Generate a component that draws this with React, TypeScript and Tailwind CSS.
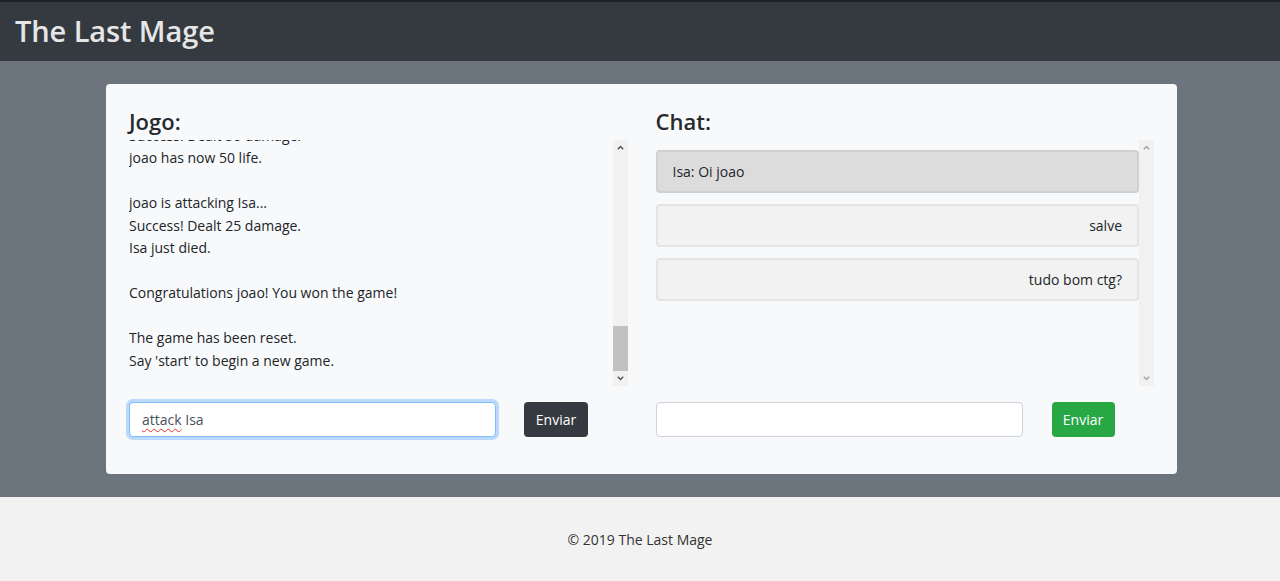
import React from "react";

const logLines = [
  "joao is attacking Isa...",
  "Success! Dealt 50 damage.",
  "joao has now 50 life.",
  "",
  "joao is attacking Isa...",
  "Success! Dealt 25 damage.",
  "Isa just died.",
  "",
  "Congratulations joao! You won the game!",
  "",
  "The game has been reset.",
  "Say 'start' to begin a new game.",
];

const messages = [
  { text: "Isa: Oi joao", mine: false },
  { text: "salve", mine: true },
  { text: "tudo bom ctg?", mine: true },
];

function Chevron({ up, color }: { up?: boolean; color: string }) {
  return (
    <svg width="7" height="5" viewBox="0 0 7 5" className={up ? "" : "rotate-180"}>
      <path d="M0.8 4.2 L3.5 1.4 L6.2 4.2" fill="none" stroke={color} strokeWidth="1.4" />
    </svg>
  );
}

function Scrollbar({ thumb }: { thumb: boolean }) {
  const arrow = thumb ? "#505050" : "#a3a3a3";
  return (
    <div className="w-[15px] shrink-0 bg-[#f1f1f1] flex flex-col">
      <div className="h-[15px] flex items-center justify-center">
        <Chevron up color={arrow} />
      </div>
      <div className="flex-1 flex flex-col justify-end">
        {thumb && <div className="h-[45px] bg-[#c1c1c1]" />}
      </div>
      <div className="h-[15px] flex items-center justify-center">
        <Chevron color={arrow} />
      </div>
    </div>
  );
}

export default function App() {
  return (
    <div className="min-h-[581px] flex flex-col font-['Open_Sans',sans-serif] text-[#212529]">
      <header className="h-[61px] bg-[#343a40] border-t-2 border-[#1d2124] flex items-center pl-[15px] pb-[3px]">
        <h1 className="text-[29px] font-semibold text-[#e6e6e6] leading-none tracking-[-0.1px]">
          The Last Mage
        </h1>
      </header>

      <main className="bg-[#6c757d] pt-[23px] pb-[23px]">
        <div className="ml-[106px] w-[1071px] bg-[#f8f9fa] rounded-[4px] px-[23px] pt-[24px] pb-[37px] grid grid-cols-2 gap-[28px]">
          <section className="flex flex-col">
            <h2 className="text-[22px] font-semibold leading-[26px] text-[#262a2e]">Jogo:</h2>
            <div className="mt-[6px] h-[246px] flex">
              <div className="flex-1 overflow-hidden flex flex-col justify-end pb-[14px] text-[14px] leading-[22.5px]">
                {logLines.map((line, i) => (
                  <div key={i} className="h-[22.5px] shrink-0 whitespace-pre">
                    {line}
                  </div>
                ))}
              </div>
              <Scrollbar thumb />
            </div>
            <div className="mt-[16px] flex items-center">
              <div className="w-[367px] h-[35px] bg-white border border-[#80bdff] rounded-[4px] shadow-[0_0_0_3px_rgba(0,123,255,0.25)] flex items-center px-[12px] text-[14px] text-[#495057]">
                <span className="underline decoration-wavy decoration-[#e03030] decoration-1 underline-offset-[3px]">
                  attack
                </span>
                <span className="whitespace-pre"> Isa</span>
              </div>
              <button className="ml-[28px] w-[64px] h-[35px] bg-[#343a40] text-white text-[14px] rounded-[4px]">
                Enviar
              </button>
            </div>
          </section>

          <section className="flex flex-col">
            <h2 className="text-[22px] font-semibold leading-[26px] text-[#262a2e]">Chat:</h2>
            <div className="mt-[6px] h-[246px] flex">
              <div className="flex-1 pt-[10px] flex flex-col gap-[11px] text-[14px]">
                {messages.map((m, i) => (
                  <div
                    key={i}
                    className={
                      m.mine
                        ? "h-[43px] shrink-0 flex items-center justify-end px-[15px] bg-[#f2f2f2] border-2 border-[#e4e4e4] rounded-[4px]"
                        : "h-[43px] shrink-0 flex items-center px-[15px] bg-[#dcdcdc] border-2 border-[#d0d0d0] rounded-[4px]"
                    }
                  >
                    {m.text}
                  </div>
                ))}
              </div>
              <Scrollbar thumb={false} />
            </div>
            <div className="mt-[16px] flex items-center">
              <div className="w-[367px] h-[35px] bg-white border border-[#ced4da] rounded-[4px]" />
              <button className="ml-[29px] w-[63px] h-[35px] bg-[#28a745] text-white text-[14px] rounded-[4px]">
                Enviar
              </button>
            </div>
          </section>
        </div>
      </main>

      <footer className="h-[84px] bg-[#f2f2f2] flex items-center justify-center text-[14px] text-[#333333]">
        © 2019 The Last Mage
      </footer>
    </div>
  );
}
